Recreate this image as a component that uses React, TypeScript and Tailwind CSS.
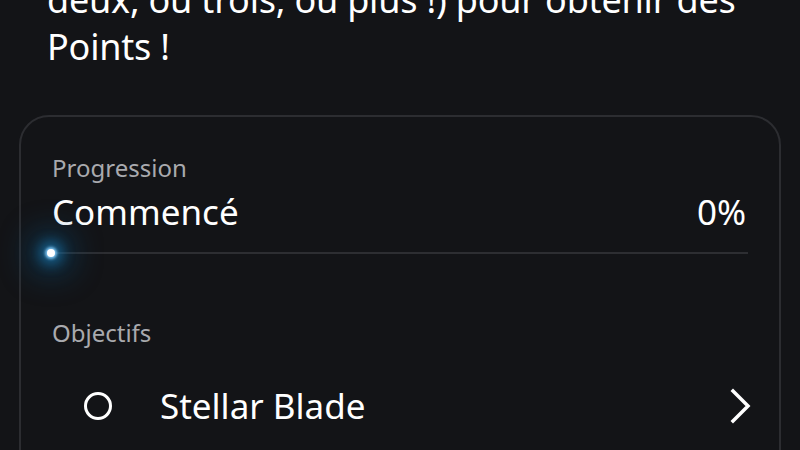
export default function App() {
  return (
    <div
      className="w-[800px] h-[450px] overflow-hidden bg-[#131417] text-white"
      style={{ fontFamily: '"Noto Sans", "Open Sans", sans-serif' }}
    >
      <p className="mt-[-24px] px-[47px] text-[36px] leading-[47px] tracking-[-0.2px] text-white">
        deux, ou trois, ou plus !) pour obtenir des
        <br />
        Points !
      </p>

      <div className="mx-[19px] mt-[45px] rounded-[30px] border-2 border-[#2c2d31] px-[31px] pt-[36px] pb-20">
        <div className="text-[24px] leading-[30px] text-[#a9aaae]">Progression</div>
        <div className="mt-[9px] flex items-end justify-between text-[35px] leading-[40px]">
          <span>Commencé</span>
          <span className="mr-[2px]">0%</span>
        </div>
        <div className="relative mt-[20px] h-[2px] bg-[#2d2e32]">
          <div className="absolute left-[-5px] top-[-3px] h-[8px] w-[8px] rounded-full bg-white shadow-[0_0_3px_2px_rgba(140,210,255,0.9),0_0_12px_8px_rgba(25,130,190,0.55),0_0_30px_18px_rgba(12,85,130,0.45)]" />
        </div>

        <div className="mt-[64px] text-[24px] leading-[30px] text-[#a9aaae]">Objectifs</div>
        <div className="mt-[38px] flex items-center">
          <div className="ml-[32px] h-[28px] w-[28px] rounded-full border-[3px] border-white" />
          <span className="ml-[48px] text-[35px] leading-[40px]">Stellar Blade</span>
          <svg className="ml-auto mr-[-4px]" width="22" height="36" viewBox="0 0 22 36" fill="none">
            <polyline
              points="3,3 18,18 3,33"
              stroke="white"
              strokeWidth="3.5"
              strokeLinecap="square"
              strokeLinejoin="miter"
            />
          </svg>
        </div>
      </div>
    </div>
  );
}
